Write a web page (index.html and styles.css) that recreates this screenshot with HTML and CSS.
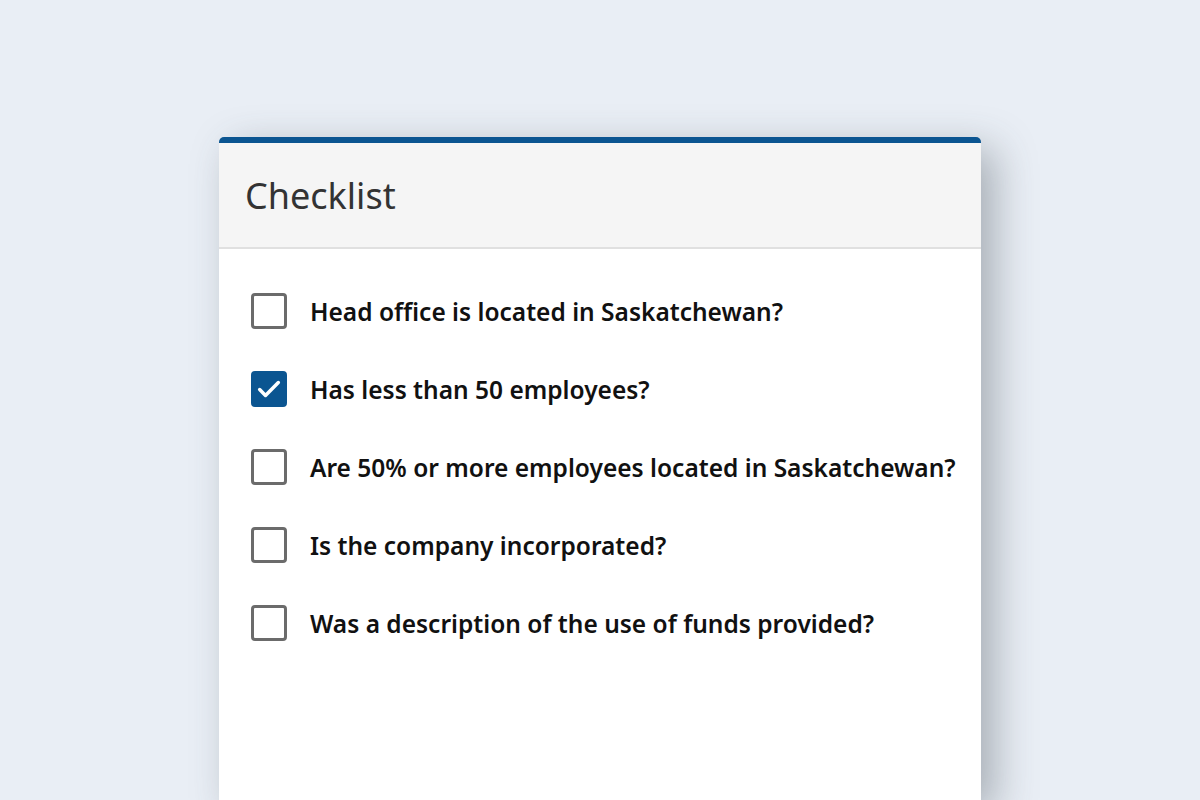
FILE: index.html
```html
<!DOCTYPE html>
<html lang="en">
<head>
    <meta charset="UTF-8">
    <meta name="viewport" content="width=device-width, initial-scale=1.0">
    <title>Checklist</title>
    <link rel="stylesheet" href="styles.css">
</head>
<body>
    <div class="card">
        <div class="card-header">
            <h1>Checklist</h1>
        </div>

        <ul class="checklist">
            <li class="check-item">
                <span class="box"></span>
                <span class="label">Head office is located in Saskatchewan?</span>
            </li>
            <li class="check-item">
                <span class="box checked">
                    <svg viewBox="0 0 24 24" width="28" height="28"><path d="M4 12.5l5 5 11-11" fill="none" stroke="#fff" stroke-width="3" stroke-linecap="round" stroke-linejoin="round"/></svg>
                </span>
                <span class="label">Has less than 50 employees?</span>
            </li>
            <li class="check-item">
                <span class="box"></span>
                <span class="label">Are 50% or more employees located in Saskatchewan?</span>
            </li>
            <li class="check-item">
                <span class="box"></span>
                <span class="label">Is the company incorporated?</span>
            </li>
            <li class="check-item">
                <span class="box"></span>
                <span class="label">Was a description of the use of funds provided?</span>
            </li>
        </ul>
    </div>
</body>
</html>
```

FILE: styles.css
```css
* {
    margin: 0;
    padding: 0;
    box-sizing: border-box;
}

body {
    height: 800px;
    overflow: hidden;
    background: #e9eef5;
    font-family: "Noto Sans", "Open Sans", sans-serif;
    padding: 137px 0 0 219px;
}

.card {
    width: 762px;
    height: 663px;
    background: #fff;
    border-top: 6px solid #0b5591;
    border-radius: 5px 5px 0 0;
    box-shadow: 14px 12px 40px rgba(60, 70, 80, 0.38);
}

.card-header {
    height: 106px;
    background: #f5f5f5;
    border-bottom: 2px solid #e0e0e0;
    display: flex;
    align-items: center;
    padding: 0 26px;
}

h1 {
    font-size: 36px;
    font-weight: 400;
    color: #333;
}

.checklist {
    list-style: none;
    padding: 44px 0 0 32px;
    display: flex;
    flex-direction: column;
    gap: 42px;
}

.check-item {
    display: flex;
    align-items: center;
    gap: 23px;
    height: 36px;
}

.box {
    width: 36px;
    height: 36px;
    border: 3px solid #6b6b6b;
    border-radius: 4px;
    flex-shrink: 0;
    display: flex;
    align-items: center;
    justify-content: center;
}

.box.checked {
    background: #0b5591;
    border-color: #0b5591;
}

.label {
    font-size: 24.5px;
    font-weight: 600;
    color: #111;
}
```
